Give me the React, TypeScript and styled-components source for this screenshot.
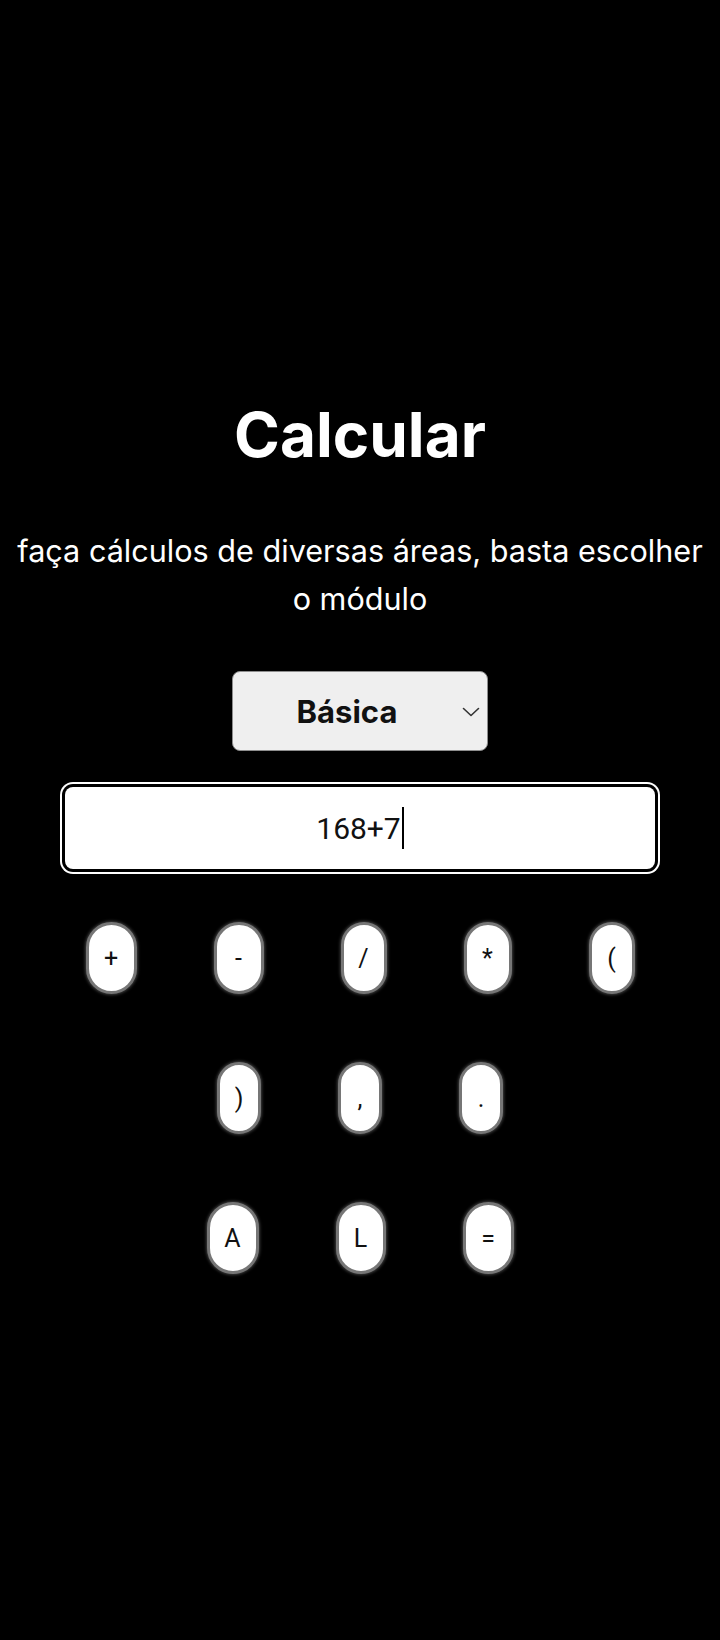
import styled, { createGlobalStyle } from 'styled-components'
import { useState } from 'react'

const GlobalStyle = createGlobalStyle`
  html, body {
    margin: 0;
    padding: 0;
    background: #000;
  }
  * {
    box-sizing: border-box;
  }
`

const Page = styled.main`
  min-height: 1640px;
  display: flex;
  flex-direction: column;
  align-items: center;
  padding: 395px 8px 0;
  color: #fff;
  font-family: Inter, "Noto Sans", sans-serif;
`

const Title = styled.h1`
  margin: 0;
  font-size: 62px;
  line-height: 80px;
  font-weight: 700;
`

const Subtitle = styled.p`
  margin: 52px 0 0;
  font-size: 30.6px;
  line-height: 48px;
  font-weight: 400;
  text-align: center;
`

const SelectWrap = styled.div`
  position: relative;
  margin-top: 48px;
  width: 256px;
  height: 80px;
`

const ModuleSelect = styled.select`
  appearance: none;
  width: 100%;
  height: 100%;
  padding: 0 34px 0 8px;
  background: #efefef;
  border: 1.5px solid #8d8d8d;
  border-radius: 8px;
  color: #111;
  font-family: Inter, "Noto Sans", sans-serif;
  font-size: 31px;
  font-weight: 700;
  text-align: center;
  text-align-last: center;
`

const Chevron = styled.svg`
  position: absolute;
  left: 230px;
  top: 36px;
  width: 18px;
  height: 10px;
  pointer-events: none;
`

const Display = styled.div`
  margin-top: 36px;
  width: 590px;
  height: 82px;
  display: flex;
  align-items: center;
  justify-content: center;
  background: #fff;
  border-radius: 8px;
  box-shadow: 0 0 0 3px #000, 0 0 0 5px #fff;
  color: #111;
  font-family: Roboto, "Noto Sans", sans-serif;
  font-size: 30px;
`

const Caret = styled.span`
  display: inline-block;
  width: 2px;
  height: 42px;
  margin-left: 1px;
  background: #000;
`

const Keypad = styled.div`
  margin-top: 53px;
  display: flex;
  flex-direction: column;
  align-items: center;
  gap: 68px;
`

const KeyRow = styled.div`
  display: flex;
  justify-content: center;
  gap: 77px;
`

const Key = styled.button<{ $w: number }>`
  width: ${props => props.$w}px;
  height: 72px;
  padding: 0;
  display: flex;
  align-items: center;
  justify-content: center;
  background: #fff;
  border: 3px solid #767676;
  border-radius: 999px;
  box-shadow: 0 0 3px 1px rgba(80, 80, 80, 0.8);
  color: #111;
  font-family: Roboto, "Noto Sans", sans-serif;
  font-size: 25px;
  font-weight: 400;
  line-height: 1;
  cursor: pointer;
`

const rows = [
  [['+', 51], ['-', 50], ['/', 46], ['*', 48], ['(', 46]],
  [[')', 44], [',', 44], ['.', 44]],
  [['A', 52], ['L', 50], ['=', 51]],
] as [string, number][][]

export default function App() {
  const [module, setModule] = useState('basica')
  const [expr, setExpr] = useState('168+7')

  const press = (k: string) => {
    if (k === 'A') return setExpr(expr.slice(0, -1))
    if (k === 'L') return setExpr('')
    if (k === '=') {
      try {
        // eslint-disable-next-line no-new-func
        setExpr(String(Function(`return (${expr.replace(/,/g, '.')})`)()))
      } catch {
        setExpr('Erro')
      }
      return
    }
    setExpr(expr + k)
  }

  return (
    <>
      <GlobalStyle />
      <Page>
        <Title>Calcular</Title>
        <Subtitle>
          faça cálculos de diversas áreas, basta escolher o módulo
        </Subtitle>
        <SelectWrap>
          <ModuleSelect value={module} onChange={e => setModule(e.target.value)}>
            <option value="basica">Básica</option>
            <option value="geometria">Geometria</option>
            <option value="fisica">Física</option>
          </ModuleSelect>
          <Chevron viewBox="0 0 18 10" fill="none">
            <path d="M1.5 1.5 9 8.5l7.5-7" stroke="#333" strokeWidth="1.6" strokeLinecap="round" strokeLinejoin="round" />
          </Chevron>
        </SelectWrap>
        <Display>
          {expr}
          <Caret />
        </Display>
        <Keypad>
          {rows.map((row, i) => (
            <KeyRow key={i}>
              {row.map(([k, w]) => (
                <Key key={k} $w={w} onClick={() => press(k)}>{k}</Key>
              ))}
            </KeyRow>
          ))}
        </Keypad>
      </Page>
    </>
  )
}
